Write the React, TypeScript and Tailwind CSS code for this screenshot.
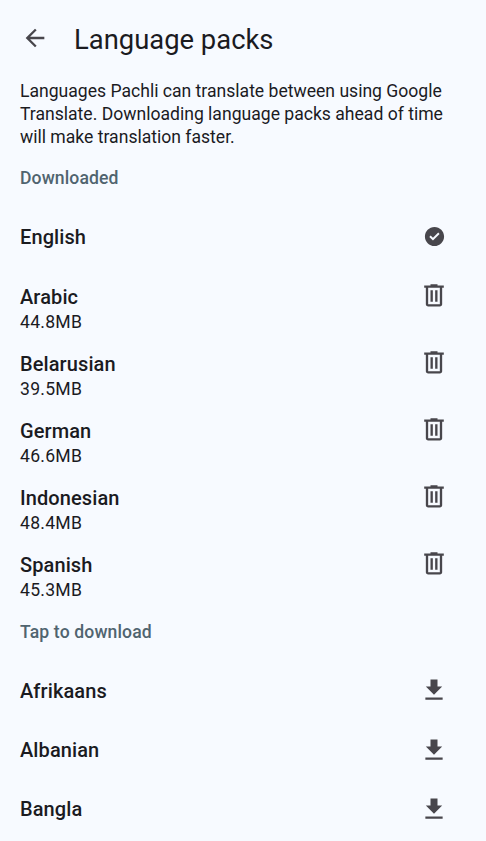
import React from "react";

const downloaded = [
  { name: "Arabic", size: "44.8MB" },
  { name: "Belarusian", size: "39.5MB" },
  { name: "German", size: "46.6MB" },
  { name: "Indonesian", size: "48.4MB" },
  { name: "Spanish", size: "45.3MB" },
];
const available = ["Afrikaans", "Albanian", "Bangla"];

function Icon({ d, className }: { d: string; className: string }) {
  return (
    <svg viewBox="0 0 24 24" fill="currentColor" className={`shrink-0 text-[#48464c] ${className}`} aria-hidden="true">
      <path fillRule="evenodd" d={d} />
    </svg>
  );
}

const BACK = "M20 11H7.83l5.59-5.59L12 4l-8 8 8 8 1.41-1.41L7.83 13H20v-2z";
const CHECK = "M12 2C6.48 2 2 6.48 2 12s4.48 10 10 10 10-4.48 10-10S17.52 2 12 2zM10.4 16.2 6.6 12.4l1.4-1.4 2.4 2.4 5.5-5.5 1.4 1.4-6.9 6.9z";
const TRASH =
  "M7 21c-.55 0-1.02-.196-1.413-.587A1.926 1.926 0 0 1 5 19V5H3.6V3H9V2h6v1h5.4v2H19v14c0 .55-.196 1.02-.587 1.413A1.926 1.926 0 0 1 17 21H7zM17 5H7v14h10V5zM9 17h2V7H9v10zm4 0h2V7h-2v10z";
const DOWNLOAD = "M19 9h-4V3H9v6H5l7 7 7-7zM4.6 18.4v1.9h14.8v-1.9H4.6z";

export default function App() {
  return (
    <div className="h-[841px] w-[486px] overflow-hidden bg-[#f7faff] font-['Roboto',sans-serif] text-[#1b1b1f]">
      <header className="flex h-20 items-center pb-[5px] pl-[21px]">
        <Icon d={BACK} className="size-7" />
        <h1 className="ml-[25px] pt-1 text-[27.4px] leading-9">Language packs</h1>
      </header>
      <p className="pl-5 text-[17.6px] leading-[23px] tracking-[-0.01px] whitespace-nowrap">
        Languages Pachli can translate between using Google
        <br />
        Translate. Downloading language packs ahead of time
        <br />
        will make translation faster.
      </p>
      <h2 className="mt-[18px] pl-5 text-[17.6px] leading-[23px] font-medium tracking-[0.11px] text-[#50646f]">Downloaded</h2>
      <ul>
        <li className="mt-[17px] flex h-[60px] items-center justify-between pr-[40.5px] pl-5">
          <span className="text-[20px] leading-[30px] font-medium tracking-[0.1px]">English</span>
          <Icon d={CHECK} className="mb-0.5 size-[23px]" />
        </li>
        {downloaded.map((p) => (
          <li key={p.name} className="flex h-[67px] justify-between pr-[38px] pl-5">
            <div className="pt-[17px]">
              <div className="text-[20px] leading-[26px] font-medium tracking-[0.1px]">{p.name}</div>
              <div className="text-[17.6px] leading-[24px] tracking-[0.25px]">{p.size}</div>
            </div>
            <Icon d={TRASH} className="mt-[15px] size-7" />
          </li>
        ))}
      </ul>
      <h2 className="mt-[19px] pl-5 text-[17.6px] leading-[23px] font-medium tracking-[0.13px] text-[#50646f]">Tap to download</h2>
      <ul className="mt-[17px]">
        {available.map((name) => (
          <li key={name} className="flex h-[59.4px] items-center justify-between pr-[38px] pl-5">
            <span className="text-[20px] leading-[30px] font-medium tracking-[0.1px]">{name}</span>
            <Icon d={DOWNLOAD} className="mb-px size-7" />
          </li>
        ))}
      </ul>
    </div>
  );
}
